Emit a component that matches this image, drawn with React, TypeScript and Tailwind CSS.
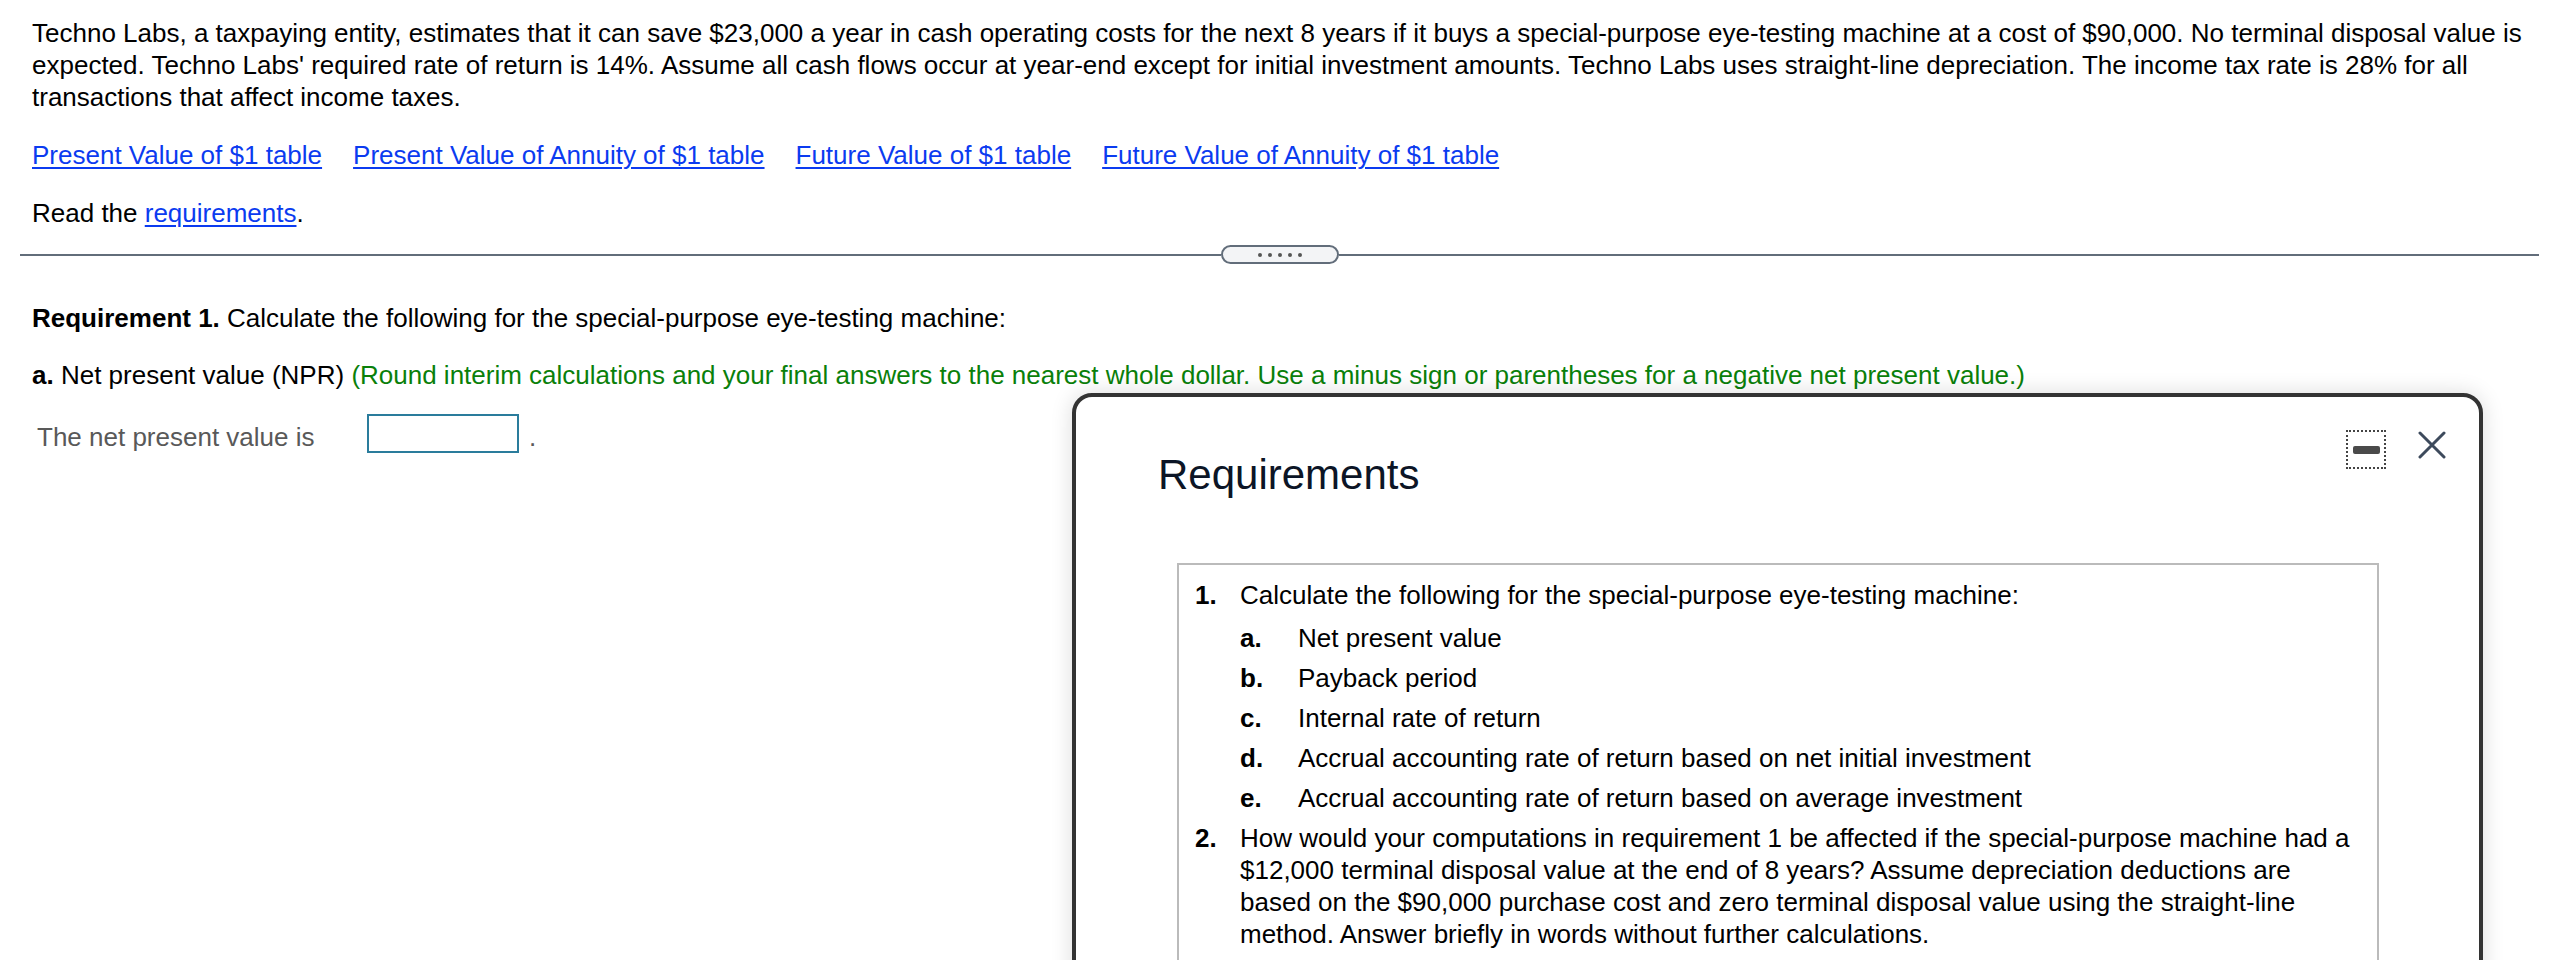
import React from 'react';

const font = { fontFamily: '"Liberation Sans", Arial, Helvetica, sans-serif' };

const tables = [
  'Present Value of $1 table',
  'Present Value of Annuity of $1 table',
  'Future Value of $1 table',
  'Future Value of Annuity of $1 table',
];

const subItems = [
  ['a.', 'Net present value'],
  ['b.', 'Payback period'],
  ['c.', 'Internal rate of return'],
  ['d.', 'Accrual accounting rate of return based on net initial investment'],
  ['e.', 'Accrual accounting rate of return based on average investment'],
];

const Divider = () => (
  <div className="flex items-center mt-[16px]">
    <div className="flex-1 h-[2px] bg-[#626d7a]" />
    <div className="w-[118px] h-[19px] rounded-full border-2 border-[#626d7a] bg-[#f3f4f6] flex items-center justify-center gap-[6px]">
      {[0, 1, 2, 3, 4].map(i => (
        <span key={i} className="w-[4px] h-[4px] rounded-full bg-[#555]" />
      ))}
    </div>
    <div className="flex-1 h-[2px] bg-[#626d7a]" />
  </div>
);

const RequirementsModal = () => (
  <div className="absolute left-[1072px] top-[393px] w-[1411px] h-[640px] bg-white border-[4px] border-[#333] rounded-[20px] shadow-[0_0_22px_rgba(0,0,0,0.14)] pl-[82px] pr-[33px] pt-[33px]">
    <div className="flex items-start justify-between">
      <h2 className="mt-[20px] text-[42px] leading-[50px] text-[#0c1526]">Requirements</h2>
      <div className="flex items-start gap-[32px]">
        <div className="w-[40px] h-[39px] border-2 border-dotted border-[#444] flex items-center justify-center">
          <div className="w-[27px] h-[8px] rounded-[2px] bg-[#4a4a4a]" />
        </div>
        <svg width="28" height="28" viewBox="0 0 28 28" className="mt-[1px]">
          <path d="M2 2 L26 26 M26 2 L2 26" stroke="#3d4a5c" strokeWidth="3" strokeLinecap="round" />
        </svg>
      </div>
    </div>
    <div className="mt-[63px] ml-[19px] w-[1202px] h-[500px] border-2 border-[#bbb] pl-[16px] pr-[14px] pt-[14px] text-[26px] leading-[32px] text-black">
      <div className="flex">
        <span className="w-[45px] shrink-0 font-bold">1.</span>
        <div className="flex-1">
          <div>Calculate the following for the special-purpose eye-testing machine:</div>
          <div className="mt-[11px] flex flex-col gap-[8px]">
            {subItems.map(([l, t]) => (
              <div key={l} className="flex">
                <span className="w-[58px] shrink-0 font-bold">{l}</span>
                <span>{t}</span>
              </div>
            ))}
          </div>
        </div>
      </div>
      <div className="flex mt-[8px]">
        <span className="w-[45px] shrink-0 font-bold">2.</span>
        <div className="flex-1">
          How would your computations in requirement 1 be affected if the special-purpose machine had a $12,000 terminal
          disposal value at the end of 8 years? Assume depreciation deductions are based on the $90,000 purchase cost and
          zero terminal disposal value using the straight-line method. Answer briefly in words without further calculations.
        </div>
      </div>
    </div>
  </div>
);

export default function App() {
  return (
    <div className="relative h-[960px] overflow-hidden bg-white px-[20px] pt-[17px] text-[26px] leading-[32px] text-black" style={font}>
      <p className="pl-[12px]">
        Techno Labs, a taxpaying entity, estimates that it can save $23,000 a year in cash operating costs for the next 8 years
        if it buys a special-purpose eye-testing machine at a cost of $90,000. No terminal disposal value is expected. Techno
        Labs' required rate of return is 14%. Assume all cash flows occur at year-end except for initial investment amounts.
        Techno Labs uses straight-line depreciation. The income tax rate is 28% for all transactions that affect income taxes.
      </p>
      <div className="pl-[12px] mt-[26px] flex gap-[31px]">
        {tables.map(t => (
          <a key={t} href="#" className="text-[#0b3bf0] underline decoration-[2px] underline-offset-[3px]">{t}</a>
        ))}
      </div>
      <p className="pl-[12px] mt-[26px]">
        Read the <a href="#" className="text-[#0b3bf0] underline decoration-[2px] underline-offset-[3px]">requirements</a>.
      </p>
      <Divider />
      <p className="pl-[12px] mt-[38px]">
        <span className="font-bold">Requirement 1.</span> Calculate the following for the special-purpose eye-testing machine:
      </p>
      <p className="pl-[12px] mt-[25px]">
        <span className="font-bold">a.</span> Net present value (NPR){' '}
        <span className="text-[#0a800a]">
          (Round interim calculations and your final answers to the nearest whole dollar. Use a minus sign or parentheses for a
          negative net present value.)
        </span>
      </p>
      <div className="pl-[17px] mt-[23px] flex items-start">
        <span className="w-[330px] mt-[7px] text-[#595959]">The net present value is</span>
        <input className="w-[152px] h-[39px] border-2 border-[#2a7c9c] outline-none" />
        <span className="ml-[10px] mt-[7px] text-[#595959]">.</span>
      </div>
      <RequirementsModal />
    </div>
  );
}
